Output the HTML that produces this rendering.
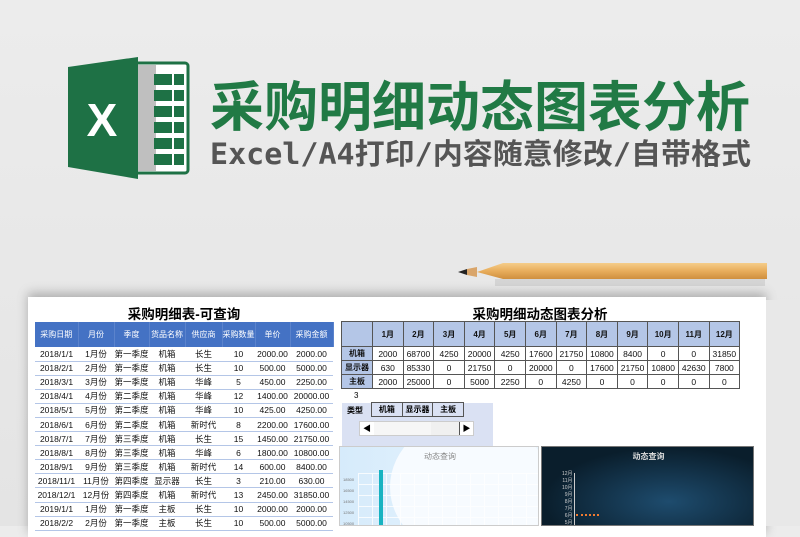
<!DOCTYPE html>
<html><head><meta charset="utf-8"><style>
*{margin:0;padding:0;box-sizing:border-box}
body{width:800px;height:526px;overflow:hidden;background:linear-gradient(#ececec,#e4e4e4);position:relative;font-family:"Liberation Sans","Noto Sans CJK SC",sans-serif}
.abs{position:absolute}
table{border-collapse:collapse;table-layout:fixed}
#lt td{height:14.1px;font-size:8.5px;text-align:center;color:#111;border-bottom:1px solid #b4c6e7;white-space:nowrap;padding:0}
#lt th{height:25px;background:#4472c4;color:#fff;font-size:8px;font-weight:normal;border-right:1px solid #5b83cc}
#rt td,#rt th{border:1px solid #555;font-size:8.5px;text-align:center;height:14px;padding:0;color:#111}
#rt th{background:#b4c6e7;height:25px;font-size:8px}
#rt td.h{background:#b4c6e7;font-weight:bold;font-size:8px}
</style></head><body>
<svg class="abs" style="left:66px;top:57px" width="126" height="122" viewBox="0 0 126 122">
<rect x="66" y="6" width="56" height="110" rx="3" fill="#fff" stroke="#1e7145" stroke-width="3"/>
<rect x="66" y="8" width="24" height="106" fill="#bfbfbf"/>
<g fill="#1e7145">
<rect x="88" y="17" width="18" height="11"/><rect x="108" y="17" width="10" height="11"/>
<rect x="88" y="33" width="18" height="11"/><rect x="108" y="33" width="10" height="11"/>
<rect x="88" y="49" width="18" height="11"/><rect x="108" y="49" width="10" height="11"/>
<rect x="88" y="65" width="18" height="11"/><rect x="108" y="65" width="10" height="11"/>
<rect x="88" y="81" width="18" height="11"/><rect x="108" y="81" width="10" height="11"/>
<rect x="88" y="97" width="18" height="11"/><rect x="108" y="97" width="10" height="11"/>
</g>
<path d="M2 10 L72 0 L72 122 L2 110 Z" fill="#1e7145"/>
<text x="36" y="79" font-family="Liberation Sans" font-weight="bold" font-size="46" fill="#fff" text-anchor="middle">X</text>
</svg>
<svg class="abs" style="left:205px;top:70px" width="555" height="100">
<text x="5" y="56" textLength="540" lengthAdjust="spacingAndGlyphs" font-family="Noto Sans CJK SC,sans-serif" font-weight="bold" font-size="54" fill="#217a45">采购明细动态图表分析</text>
<text x="5" y="94" textLength="541" lengthAdjust="spacingAndGlyphs" font-family="DejaVu Sans Mono,Noto Sans CJK SC,monospace" font-weight="bold" font-size="29" fill="#555">Excel/A4打印/内容随意修改/自带格式</text>
</svg>
<svg class="abs" style="left:455px;top:258px" width="320" height="30">
<defs><linearGradient id="pg" x1="0" y1="0" x2="0" y2="1"><stop offset="0" stop-color="#f5cd8a"/><stop offset=".5" stop-color="#e8ad5c"/><stop offset="1" stop-color="#cf8f3e"/></linearGradient></defs>
<rect x="40" y="21" width="270" height="7" fill="#000" opacity=".08"/>
<path d="M48 5 L312 5 L312 21 L48 21 L22 14 Z" fill="url(#pg)"/>
<path d="M3 14 L12 11 L12 17 Z" fill="#222"/>
<path d="M12 11 L22 9 L22 19 L12 17Z" fill="#d9a56a"/>
</svg>
<div class="abs" style="left:28px;top:297px;width:738px;height:240px;background:#fff;box-shadow:0 -4px 10px rgba(0,0,0,.25)"></div>
<div class="abs" style="left:766px;top:300px;width:34px;height:226px;background:#e8e8e8"></div>
<div class="abs" style="left:35px;top:303px;width:298px;text-align:center;font-weight:bold;font-size:13.5px;color:#000">采购明细表-可查询</div>
<table id="lt" class="abs" style="left:35px;top:322px;width:298px">
<colgroup><col width="43"><col width="36"><col width="35"><col width="36"><col width="37"><col width="33"><col width="35"><col width="43"></colgroup>
<tr><th>采购日期</th><th>月份</th><th>季度</th><th>货品名称</th><th>供应商</th><th>采购数量</th><th>单价</th><th>采购金额</th></tr>
<tr><td>2018/1/1</td><td>1月份</td><td>第一季度</td><td>机箱</td><td>长生</td><td>10</td><td>2000.00</td><td>2000.00</td></tr>
<tr><td>2018/2/1</td><td>2月份</td><td>第一季度</td><td>机箱</td><td>长生</td><td>10</td><td>500.00</td><td>5000.00</td></tr>
<tr><td>2018/3/1</td><td>3月份</td><td>第一季度</td><td>机箱</td><td>华峰</td><td>5</td><td>450.00</td><td>2250.00</td></tr>
<tr><td>2018/4/1</td><td>4月份</td><td>第二季度</td><td>机箱</td><td>华峰</td><td>12</td><td>1400.00</td><td>20000.00</td></tr>
<tr><td>2018/5/1</td><td>5月份</td><td>第二季度</td><td>机箱</td><td>华峰</td><td>10</td><td>425.00</td><td>4250.00</td></tr>
<tr><td>2018/6/1</td><td>6月份</td><td>第二季度</td><td>机箱</td><td>新时代</td><td>8</td><td>2200.00</td><td>17600.00</td></tr>
<tr><td>2018/7/1</td><td>7月份</td><td>第三季度</td><td>机箱</td><td>长生</td><td>15</td><td>1450.00</td><td>21750.00</td></tr>
<tr><td>2018/8/1</td><td>8月份</td><td>第三季度</td><td>机箱</td><td>华峰</td><td>6</td><td>1800.00</td><td>10800.00</td></tr>
<tr><td>2018/9/1</td><td>9月份</td><td>第三季度</td><td>机箱</td><td>新时代</td><td>14</td><td>600.00</td><td>8400.00</td></tr>
<tr><td>2018/11/1</td><td>11月份</td><td>第四季度</td><td>显示器</td><td>长生</td><td>3</td><td>210.00</td><td>630.00</td></tr>
<tr><td>2018/12/1</td><td>12月份</td><td>第四季度</td><td>机箱</td><td>新时代</td><td>13</td><td>2450.00</td><td>31850.00</td></tr>
<tr><td>2019/1/1</td><td>1月份</td><td>第一季度</td><td>主板</td><td>长生</td><td>10</td><td>2000.00</td><td>2000.00</td></tr>
<tr><td>2018/2/2</td><td>2月份</td><td>第一季度</td><td>主板</td><td>长生</td><td>10</td><td>500.00</td><td>5000.00</td></tr>
</table>
<div class="abs" style="left:341px;top:303px;width:398px;text-align:center;font-weight:bold;font-size:13.5px;color:#000">采购明细动态图表分析</div>
<table id="rt" class="abs" style="left:341px;top:321px;width:398px">
<colgroup><col width="31"><col span="12" width="30.6"></colgroup>
<tr><th></th><th>1月</th><th>2月</th><th>3月</th><th>4月</th><th>5月</th><th>6月</th><th>7月</th><th>8月</th><th>9月</th><th>10月</th><th>11月</th><th>12月</th></tr>
<tr><td class="h">机箱</td><td>2000</td><td>68700</td><td>4250</td><td>20000</td><td>4250</td><td>17600</td><td>21750</td><td>10800</td><td>8400</td><td>0</td><td>0</td><td>31850</td></tr>
<tr><td class="h">显示器</td><td>630</td><td>85330</td><td>0</td><td>21750</td><td>0</td><td>20000</td><td>0</td><td>17600</td><td>21750</td><td>10800</td><td>42630</td><td>7800</td></tr>
<tr><td class="h">主板</td><td>2000</td><td>25000</td><td>0</td><td>5000</td><td>2250</td><td>0</td><td>4250</td><td>0</td><td>0</td><td>0</td><td>0</td><td>0</td></tr>
</table>
<div class="abs" style="left:354px;top:391px;font-size:8px">3</div>
<div class="abs" style="left:342px;top:403px;width:151px;height:43px;background:#dae1f3"></div>
<div class="abs" style="left:347px;top:405px;font-size:8px;font-weight:bold">类型</div>
<div class="abs" style="left:371px;top:402px;width:93px;height:15px;display:flex;font-size:8px;font-weight:bold">
<div style="flex:1;border:1px solid #555;text-align:center;line-height:13px;background:#dae1f3">机箱</div>
<div style="flex:1;border:1px solid #555;border-left:0;text-align:center;line-height:13px;background:#dae1f3">显示器</div>
<div style="flex:1;border:1px solid #555;border-left:0;text-align:center;line-height:13px;background:#dae1f3">主板</div></div>
<div class="abs" style="left:359px;top:421px;width:115px;height:15px;background:#f0f0f0;border:1px solid #ccc">
<div class="abs" style="left:0;top:0;width:14px;height:13px;background:#fff;font-size:8px;text-align:center;line-height:13px">◀</div>
<div class="abs" style="left:14px;top:0;width:57px;height:13px;background:#f6f6f6"></div>
<div class="abs" style="right:0;top:0;width:14px;height:13px;background:#fff;font-size:8px;text-align:center;line-height:13px;border-left:1px solid #555">▶</div></div>
<div class="abs" style="left:339px;top:446px;width:200px;height:80px;background:linear-gradient(90deg,#d6ebfb,#eaf5fd);border:1px solid #ccc;overflow:hidden">
<div class="abs" style="left:50px;top:-30px;width:160px;height:140px;border-radius:50%;background:#f7fbff"></div>
<div class="abs" style="left:0;top:4px;width:200px;text-align:center;font-size:8px;color:#888">动态查询</div>
<div class="abs" style="left:18px;top:26px;width:180px;height:60px;background-image:linear-gradient(#fff 1px,transparent 1px),linear-gradient(90deg,#fff 1px,transparent 1px);background-size:14px 11px;opacity:.8"></div>
<div class="abs" style="left:3px;top:27px;font-size:4px;color:#777;line-height:11px">18500<br>16500<br>14500<br>12500<br>10500</div>
<div class="abs" style="left:39px;top:23px;width:4px;height:60px;background:#17b3c1"></div>
</div>
<div class="abs" style="left:541px;top:446px;width:213px;height:80px;background:radial-gradient(ellipse at 60% 70%,#1e4c6e,#0a1e2c 70%);border:1px solid #777;overflow:hidden">
<div class="abs" style="left:0;top:4px;width:213px;text-align:center;font-size:8px;color:#ddd;font-weight:bold">动态查询</div>
<div class="abs" style="left:20px;top:24px;font-size:5px;color:#ccc;line-height:7px;text-align:right">12月<br>11月<br>10月<br>9月<br>8月<br>7月<br>6月<br>5月</div>
<div class="abs" style="left:32px;top:26px;width:1px;height:60px;background:#ccc"></div>
<div class="abs" style="left:34px;top:67px;width:23px;height:2px;border-top:2px dotted #f07a30"></div>
<div class="abs" style="left:34px;top:81px;width:12px;height:2px;border-top:2px dotted #f07a30"></div>
</div>
</body></html>
